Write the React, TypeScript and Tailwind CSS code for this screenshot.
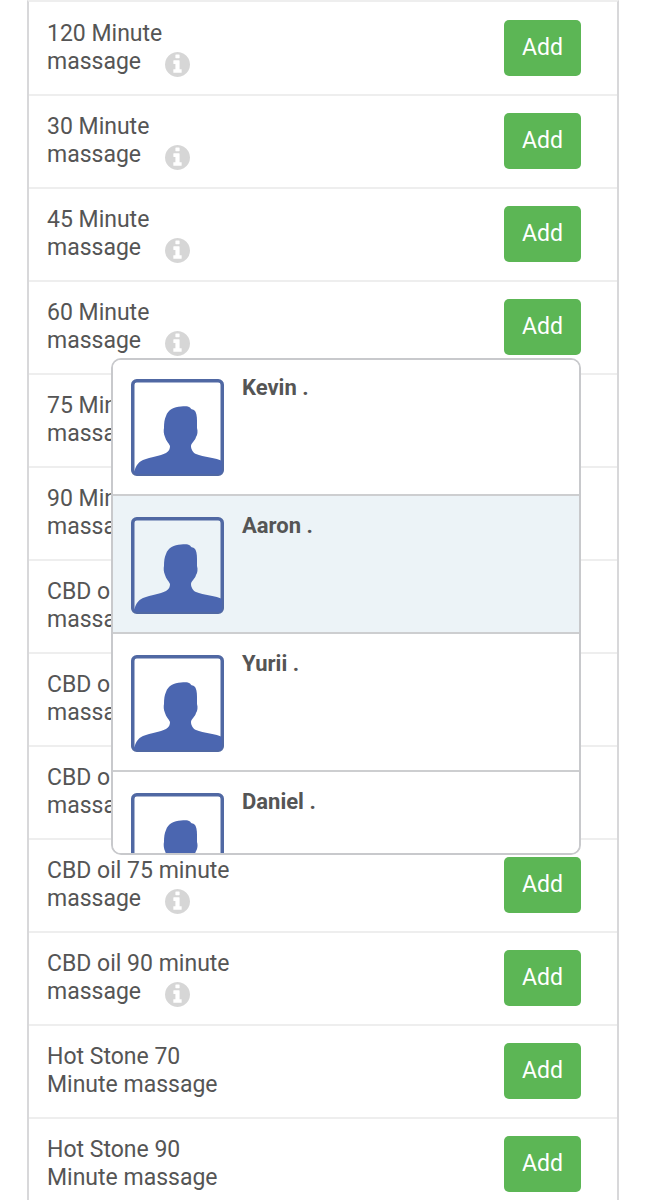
import { useState } from "react";

const services = [
  { name: "120 Minute massage", info: true },
  { name: "30 Minute massage", info: true },
  { name: "45 Minute massage", info: true },
  { name: "60 Minute massage", info: true },
  { name: "75 Minute massage", info: true },
  { name: "90 Minute massage", info: true },
  { name: "CBD oil 30 minute massage", info: true },
  { name: "CBD oil 45 minute massage", info: true },
  { name: "CBD oil 60 minute massage", info: true },
  { name: "CBD oil 75 minute massage", info: true },
  { name: "CBD oil 90 minute massage", info: true },
  { name: "Hot Stone 70 Minute massage", info: false },
  { name: "Hot Stone 90 Minute massage", info: false },
];

const staff = ["Kevin .", "Aaron .", "Yurii .", "Daniel ."];

function InfoIcon() {
  return (
    <svg
      viewBox="128 128 1536 1536"
      className="-mb-1 ml-6 inline-block size-[25px] align-middle text-[#d6d6d6]"
      fill="currentColor"
      role="img"
      aria-label="Details"
    >
      <path d="M1152 1376v-160q0-14-9-23t-23-9h-96v-512q0-14-9-23t-23-9h-320q-14 0-23 9t-9 23v160q0 14 9 23t23 9h96v320h-96q-14 0-23 9t-9 23v160q0 14 9 23t23 9h448q14 0 23-9t9-23zm-128-896v-160q0-14-9-23t-23-9h-192q-14 0-23 9t-9 23v160q0 14 9 23t23 9h192q14 0 23-9t9-23zm640 416q0 209-103 385.5t-279.5 279.5-385.5 103-385.5-103-279.5-279.5-103-385.5 103-385.5 279.5-279.5 385.5-103 385.5 103 279.5 279.5 103 385.5z" />
    </svg>
  );
}

function Avatar() {
  return (
    <svg viewBox="0 0 93 97" className="h-[97px] w-[93px] shrink-0" aria-hidden="true">
      <rect x="1.75" y="1.75" width="89.5" height="93.5" rx="4" fill="none" stroke="#5068a3" strokeWidth="3.5" />
      <path
        d="M3 94 C4 88 7 83 12 81 C20 78 29 77 35 74 C38 72 39 70 39 67 C38 64 35 62 34 58 C32.500 55 32.500 51 33 49 C33 44 33.500 40 35 37 C37 31 43 27.500 50 27.500 C54 27.200 57 27 59 28.500 C60 30 61 30.500 63 31 C65.500 33 66 37 66 42 V49 C67 52 66.500 56 65 58 C64 62 60 64 60 67 C60 70 62 74 65 75 C72 78 86 79 91 82 V92 Q91 95 88 95 H5 Z"
        fill="#4b66b0"
      />
    </svg>
  );
}

function StaffMenu() {
  const [active, setActive] = useState("Aaron .");

  return (
    <ul className="absolute top-[76px] right-9 left-[82px] z-10 h-[497px] overflow-hidden rounded-[10px] border-2 border-[#c8c9cc] bg-white">
      {staff.map((name) => (
        <li key={name} className="group border-t-2 border-[#cdced0] first:border-t-0">
          <button
            type="button"
            onMouseEnter={() => setActive(name)}
            className={`flex w-full items-start gap-[18px] px-[18px] pt-[21px] pb-[18px] text-left group-first:pt-[19px] ${
              active === name ? "bg-[#ecf3f7]" : "bg-white"
            }`}
          >
            <Avatar />
            <span className="text-[22px] leading-[18px] font-bold">{name}</span>
          </button>
        </li>
      ))}
    </ul>
  );
}

export default function App() {
  const [open] = useState("60 Minute massage");

  return (
    <main className="bg-white font-[Roboto,sans-serif] text-[#555]">
      <ul className="mx-[27px] border-x-2 border-t-2 border-x-[#d8d8da] border-t-[#eee] pt-px">
        {services.map(({ name, info }) => (
          <li
            key={name}
            className="relative flex items-start justify-between border-b-2 border-[#eee] pt-[17px] pr-9 pb-[18px] pl-[18px]"
          >
            <p className="w-[190px] text-[23px] leading-7">
              {name}
              {info && <InfoIcon />}
            </p>
            <button
              type="button"
              className="h-14 rounded-[5px] bg-[#5cb655] px-[18px] text-[23px] leading-7 text-white"
            >
              Add
            </button>
            {open === name && <StaffMenu />}
          </li>
        ))}
      </ul>
    </main>
  );
}
